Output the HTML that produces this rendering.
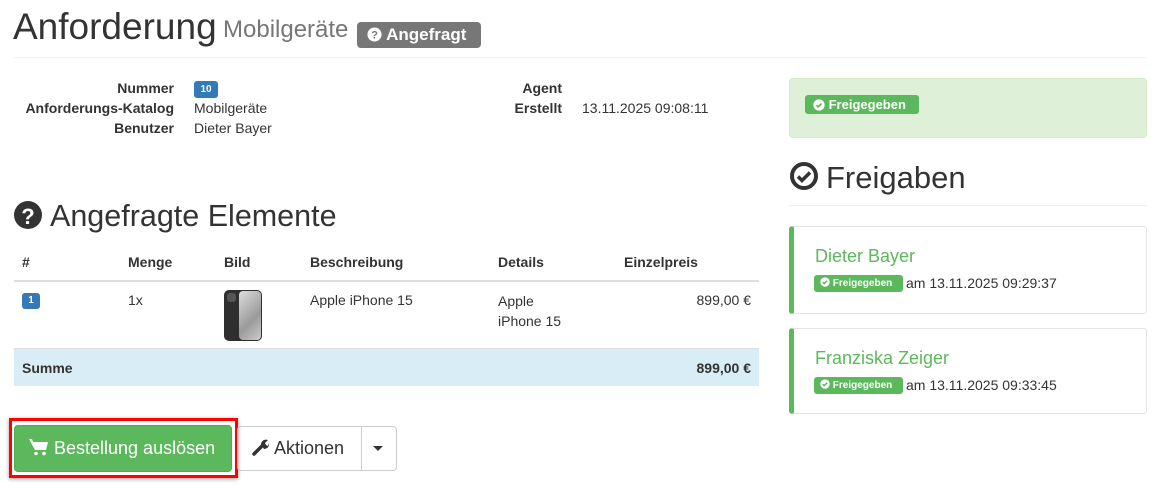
<!DOCTYPE html>
<html><head><meta charset="utf-8"><style>
*{box-sizing:border-box;margin:0;padding:0}
body{width:1161px;height:486px;overflow:hidden;background:#fff;font-family:"Liberation Sans",Arial,sans-serif;color:#333;font-size:14px;position:relative}
.a{position:absolute;white-space:nowrap}
.b{font-weight:bold}
.r{text-align:right}
.lbl{font-size:14px;font-weight:bold;color:#333}
.val{font-size:14px}
.gb{background:#5cb85c;color:#fff;font-weight:bold;border-radius:3px;position:absolute}
.th{font-size:14px;font-weight:bold;top:254px}
.card{position:absolute;left:789px;width:358px;border:1px solid #e3e3e3;border-left:5px solid #5cb85c;border-radius:3px}
.name{position:absolute;left:21px;font-size:18px;color:#5cb85c}
</style></head><body>
<div class="a" style="left:13px;top:5px;font-size:37px;line-height:44px">Anforderung</div>
<div class="a" style="left:223px;top:16px;font-size:24px;color:#777">Mobilgeräte</div>
<div class="a" style="left:357px;top:22px;width:124px;height:26px;background:#777;border-radius:4px;color:#fff;font-weight:bold;font-size:17px;line-height:26px;padding-left:10px">
<svg width="15" height="15" viewBox="0 0 16 16" style="vertical-align:-2px"><circle cx="8" cy="8" r="7.5" fill="#fff"/><text x="8" y="12.5" font-size="12" font-weight="bold" text-anchor="middle" fill="#777" font-family="Liberation Sans">?</text></svg> Angefragt</div>
<div class="a" style="left:14px;top:57px;width:1132px;height:1px;background:#eee"></div>

<div class="a lbl r" style="left:0;width:174px;top:80px">Nummer</div>
<div class="a lbl r" style="left:0;width:174px;top:100px">Anforderungs-Katalog</div>
<div class="a lbl r" style="left:0;width:174px;top:120px">Benutzer</div>
<div class="a" style="left:194px;top:81px;width:24px;height:17px;background:#337ab7;border-radius:3px;color:#fff;font-size:10px;font-weight:bold;text-align:center;line-height:17px">10</div>
<div class="a val" style="left:194px;top:100px">Mobilgeräte</div>
<div class="a val" style="left:194px;top:120px">Dieter Bayer</div>
<div class="a lbl r" style="left:400px;width:162px;top:80px">Agent</div>
<div class="a lbl r" style="left:400px;width:162px;top:100px">Erstellt</div>
<div class="a val" style="left:582px;top:100px">13.11.2025 09:08:11</div>

<div class="a" style="left:789px;top:78px;width:358px;height:60px;background:#dff0d8;border:1px solid #d6e9c6;border-radius:4px"></div>
<div class="gb" style="left:805px;top:95px;width:114px;height:19px;font-size:13px;line-height:19px;padding-left:8px"><svg width="12" height="12" viewBox="0 0 16 16" style="vertical-align:-2px"><circle cx="8" cy="8" r="7.5" fill="#fff"/><path d="M4.5 8.3l2.3 2.3 4.5-4.5" stroke="#5cb85c" stroke-width="2.2" fill="none"/></svg> Freigegeben</div>

<svg class="a" style="left:790px;top:162px" width="28" height="28" viewBox="0 0 28 28"><circle cx="14" cy="14" r="12" fill="none" stroke="#333" stroke-width="4"/><path d="M8 14.5l4 4 8-8" stroke="#333" stroke-width="3.5" fill="none"/></svg>
<div class="a" style="left:826px;top:160px;font-size:31px">Freigaben</div>
<div class="a" style="left:789px;top:205px;width:358px;height:1px;background:#eee"></div>

<div class="card" style="top:226px;height:88px">
<div class="name" style="top:19px">Dieter Bayer</div>
<div class="gb" style="left:20px;top:48px;width:89px;height:17px;font-size:10px;line-height:17px;padding-left:6px"><svg width="10" height="10" viewBox="0 0 16 16" style="vertical-align:-1px"><circle cx="8" cy="8" r="7.5" fill="#fff"/><path d="M4.5 8.3l2.3 2.3 4.5-4.5" stroke="#5cb85c" stroke-width="2.4" fill="none"/></svg> Freigegeben</div>
<div class="a" style="left:112px;top:48px;font-size:14px">am 13.11.2025 09:29:37</div>
</div>
<div class="card" style="top:328px;height:86px">
<div class="name" style="top:19px">Franziska Zeiger</div>
<div class="gb" style="left:20px;top:48px;width:89px;height:17px;font-size:10px;line-height:17px;padding-left:6px"><svg width="10" height="10" viewBox="0 0 16 16" style="vertical-align:-1px"><circle cx="8" cy="8" r="7.5" fill="#fff"/><path d="M4.5 8.3l2.3 2.3 4.5-4.5" stroke="#5cb85c" stroke-width="2.4" fill="none"/></svg> Freigegeben</div>
<div class="a" style="left:112px;top:48px;font-size:14px">am 13.11.2025 09:33:45</div>
</div>

<svg class="a" style="left:14px;top:201px" width="28" height="28" viewBox="0 0 28 28"><circle cx="14" cy="14" r="14" fill="#333"/><text x="14" y="23" font-size="22" font-weight="bold" text-anchor="middle" fill="#fff" font-family="Liberation Sans">?</text></svg>
<div class="a" style="left:50px;top:199px;font-size:30.5px">Angefragte Elemente</div>

<div class="a th" style="left:22px">#</div>
<div class="a th" style="left:128px">Menge</div>
<div class="a th" style="left:224px">Bild</div>
<div class="a th" style="left:310px">Beschreibung</div>
<div class="a th" style="left:498px">Details</div>
<div class="a th" style="left:624px">Einzelpreis</div>
<div class="a" style="left:14px;top:280px;width:745px;height:2px;background:#ddd"></div>
<div class="a" style="left:22px;top:293px;width:18px;height:16px;background:#337ab7;border-radius:3px;color:#fff;font-size:10px;font-weight:bold;text-align:center;line-height:16px">1</div>
<div class="a val" style="left:128px;top:292px">1x</div>
<div class="a" style="left:224px;top:290px;width:38px;height:51px;background:#2f2f2f;border-radius:5px;overflow:hidden">
<div style="position:absolute;left:15px;top:1px;width:22px;height:49px;background:linear-gradient(135deg,#ddd,#9a9a9a 60%,#ccc);border-radius:4px"></div>
<div style="position:absolute;left:3px;top:3px;width:9px;height:9px;background:#555;border-radius:3px"></div></div>
<div class="a val" style="left:310px;top:292px">Apple iPhone 15</div>
<div class="a val" style="left:498px;top:291px;line-height:20px">Apple<br>iPhone 15</div>
<div class="a val r" style="left:600px;width:151px;top:292px">899,00 €</div>
<div class="a" style="left:14px;top:348px;width:745px;height:1px;background:#ddd"></div>
<div class="a" style="left:14px;top:349px;width:745px;height:37px;background:#d9edf7"></div>
<div class="a lbl" style="left:22px;top:360px">Summe</div>
<div class="a lbl r" style="left:600px;width:151px;top:360px">899,00 €</div>

<div class="a" style="left:9px;top:418px;width:229px;height:60px;border:3px solid #f00;box-shadow:0 1px 4px rgba(0,0,0,.4)"></div>
<div class="a" style="left:14px;top:425px;width:218px;height:47px;background:#5cb85c;border:1px solid #4cae4c;border-radius:4px;color:#fff;font-size:18px;line-height:45px;padding-left:14px">
<svg width="20" height="18" viewBox="0 0 20 18" style="vertical-align:-2px"><path d="M0 1h3l1 3h15l-2 8H6z" fill="#fff"/><circle cx="7" cy="15.5" r="1.8" fill="#fff"/><circle cx="15" cy="15.5" r="1.8" fill="#fff"/></svg> Bestellung auslösen</div>
<div class="a" style="left:237px;top:426px;width:125px;height:45px;border:1px solid #ccc;border-radius:4px 0 0 4px;font-size:18px;line-height:43px;padding-left:14px">
<svg width="18" height="18" viewBox="0 0 18 18" style="vertical-align:-2px;margin-right:4px"><path d="M2 16L10 8" stroke="#333" stroke-width="3.5" stroke-linecap="round"/><path d="M9 6a5 5 0 0 1 7-4l-3 3 1 2 2 1 1-3a5 5 0 0 1-5 6z" fill="#333"/></svg>Aktionen</div>
<div class="a" style="left:361px;top:426px;width:36px;height:45px;border:1px solid #ccc;border-radius:0 4px 4px 0"></div>
<div class="a" style="left:373px;top:446px;width:0;height:0;border-left:5px solid transparent;border-right:5px solid transparent;border-top:5px solid #333"></div>
</body></html>
